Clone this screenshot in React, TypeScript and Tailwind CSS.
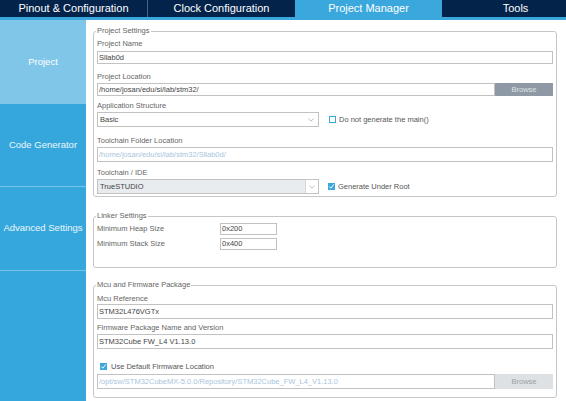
import React from 'react';

const tabs = ['Pinout & Configuration', 'Clock Configuration', 'Project Manager', 'Tools'];

function Chevron() {
  return (
    <svg width="6" height="4" viewBox="0 0 6 4" className="text-[#a0a0a0]">
      <path d="M0.5 0.6 L3 3.2 L5.5 0.6" fill="none" stroke="currentColor" strokeWidth="0.7" />
    </svg>
  );
}

function Check({ checked }: { checked?: boolean }) {
  if (checked) {
    return (
      <span className="flex h-[7px] w-[7px] shrink-0 items-center justify-center bg-[#3aa8dc]">
        <svg width="7" height="7" viewBox="0 0 7 7">
          <path d="M1.3 3.6 L2.9 5.2 L5.8 1.4" fill="none" stroke="white" strokeWidth="1" />
        </svg>
      </span>
    );
  }
  return <span className="h-[7px] w-[7px] shrink-0 border border-[#3aa8dc] bg-white" />;
}

function Label({ children, className = '' }: { children: React.ReactNode; className?: string }) {
  return <div className={`h-[10px] text-[7.5px] leading-[10px] text-[#666] ${className}`}>{children}</div>;
}

function Field({ children, className = '', muted }: { children: React.ReactNode; className?: string; muted?: boolean }) {
  return (
    <div
      className={`flex items-center overflow-hidden whitespace-nowrap border border-[#c2c2c2] bg-white pl-[1px] text-[7.5px] ${
        muted ? 'text-[#a9c5de]' : 'text-[#444]'
      } ${className}`}
    >
      {children}
    </div>
  );
}

function Group({ title, className = '', children }: { title: string; className?: string; children: React.ReactNode }) {
  return (
    <fieldset className={`ml-[7px] mr-[9px] rounded-[3px] border border-[#c6c6c6] px-[3px] ${className}`}>
      <legend className="-ml-[1px] px-[1px] text-[7.5px] leading-[10px] text-[#666]">{title}</legend>
      {children}
    </fieldset>
  );
}

export default function App() {
  return (
    <div className="flex h-screen flex-col overflow-hidden bg-white font-['Liberation_Sans',Arial,sans-serif]">
      {/* top tabs */}
      <div className="flex h-[17px] shrink-0 bg-[#03234b] text-[11px] leading-[17px] text-white">
        {tabs.map((t, i) => (
          <div
            key={t}
            className={`shrink-0 whitespace-nowrap text-center ${i === 0 ? 'w-[148px] border-r border-[#4a6387]' : 'w-[147px]'} ${
              i === 2 ? 'bg-[#3aa8dc]' : ''
            }`}
          >
            {t}
          </div>
        ))}
      </div>
      <div className="h-[3px] shrink-0 bg-[#3aa8dc]" />

      <div className="flex min-h-0 flex-1">
        {/* sidebar */}
        <div className="flex w-[86px] shrink-0 flex-col bg-[#36a7dc] text-[9.5px] text-white">
          <div className="flex h-[84px] items-center justify-center bg-[#80c6e9]">Project</div>
          <div className="flex h-[83px] items-center justify-center border-b border-[#77c3e9] text-white/90">
            Code Generator
          </div>
          <div className="flex h-[84px] items-center justify-center border-b border-[#77c3e9] text-white/90">
            Advanced Settings
          </div>
        </div>

        {/* main */}
        <div className="flex-1 pt-[6px]">
          <Group title="Project Settings" className="pb-[2px]">
            <Label className="mt-[3px]">Project Name</Label>
            <Field className="mt-[2px] h-[13px]">Sllab0d</Field>

            <Label className="mt-[8px]">Project Location</Label>
            <div className="mt-[1px] flex h-[13px]">
              <Field className="h-full flex-1">/home/josan/edu/si/lab/stm32/</Field>
              <div className="flex h-full w-[58px] items-center justify-center bg-[#8e99a5] text-[7.5px] text-[#dfe3e7]">
                Browse
              </div>
            </div>

            <Label className="mt-[5px]">Application Structure</Label>
            <div className="mt-[1px] flex items-center">
              <div className="flex h-[15px] w-[222px] items-center justify-between border border-[#c2c2c2] bg-white pl-[2px] pr-[4px] text-[7.5px] text-[#444]">
                <span>Basic</span>
                <Chevron />
              </div>
              <div className="ml-[10px] flex items-center gap-[3px] text-[7.5px] text-[#555]">
                <Check />
                <span>Do not generate the main()</span>
              </div>
            </div>

            <Label className="mt-[9px]">Toolchain Folder Location</Label>
            <Field muted className="mt-[1px] h-[15px]">
              /home/josan/edu/si/lab/stm32/Sllab0d/
            </Field>

            <Label className="mt-[6px]">Toolchain / IDE</Label>
            <div className="mt-[1px] flex items-center">
              <div className="flex h-[15px] w-[222px] border border-[#c2c2c2] text-[7.5px] text-[#444]">
                <div className="flex flex-1 items-center bg-[#e9ecef] pl-[2px]">TrueSTUDIO</div>
                <div className="flex w-[13px] items-center justify-center border-l border-[#d4d8dc] bg-white">
                  <Chevron />
                </div>
              </div>
              <div className="ml-[9px] flex items-center gap-[3px] text-[7.5px] text-[#555]">
                <Check checked />
                <span>Generate Under Root</span>
              </div>
            </div>
          </Group>

          <Group title="Linker Settings" className="mt-[14px] pb-[17px]">
            <div className="mt-[2px] flex h-[12px] items-center">
              <span className="w-[123px] text-[7.5px] text-[#666]">Minimum Heap Size</span>
              <Field className="h-full w-[57px]">0x200</Field>
            </div>
            <div className="mt-[3px] flex h-[12px] items-center">
              <span className="w-[123px] text-[7.5px] text-[#666]">Minimum Stack Size</span>
              <Field className="h-full w-[57px]">0x400</Field>
            </div>
          </Group>

          <Group title="Mcu and Firmware Package" className="mt-[12px] pb-[8px]">
            <Label className="mt-[4px]">Mcu Reference</Label>
            <Field className="h-[15px]">STM32L476VGTx</Field>

            <Label className="mt-[4px]">Firmware Package Name and Version</Label>
            <Field className="mt-[1px] h-[15px]">STM32Cube FW_L4 V1.13.0</Field>

            <div className="mt-[12px] flex h-[11px] items-center gap-[4px] pl-[3px] text-[7.5px] text-[#555]">
              <Check checked />
              <span>Use Default Firmware Location</span>
            </div>
            <div className="mt-[2px] flex h-[15px]">
              <Field muted className="h-full flex-1">
                /opt/sw/STM32CubeMX-5.0.0/Repository/STM32Cube_FW_L4_V1.13.0
              </Field>
              <div className="flex h-full w-[58px] items-center justify-center bg-[#dde1e4] text-[7.5px] text-[#9aa0a6]">
                Browse
              </div>
            </div>
          </Group>
        </div>
      </div>
    </div>
  );
}
